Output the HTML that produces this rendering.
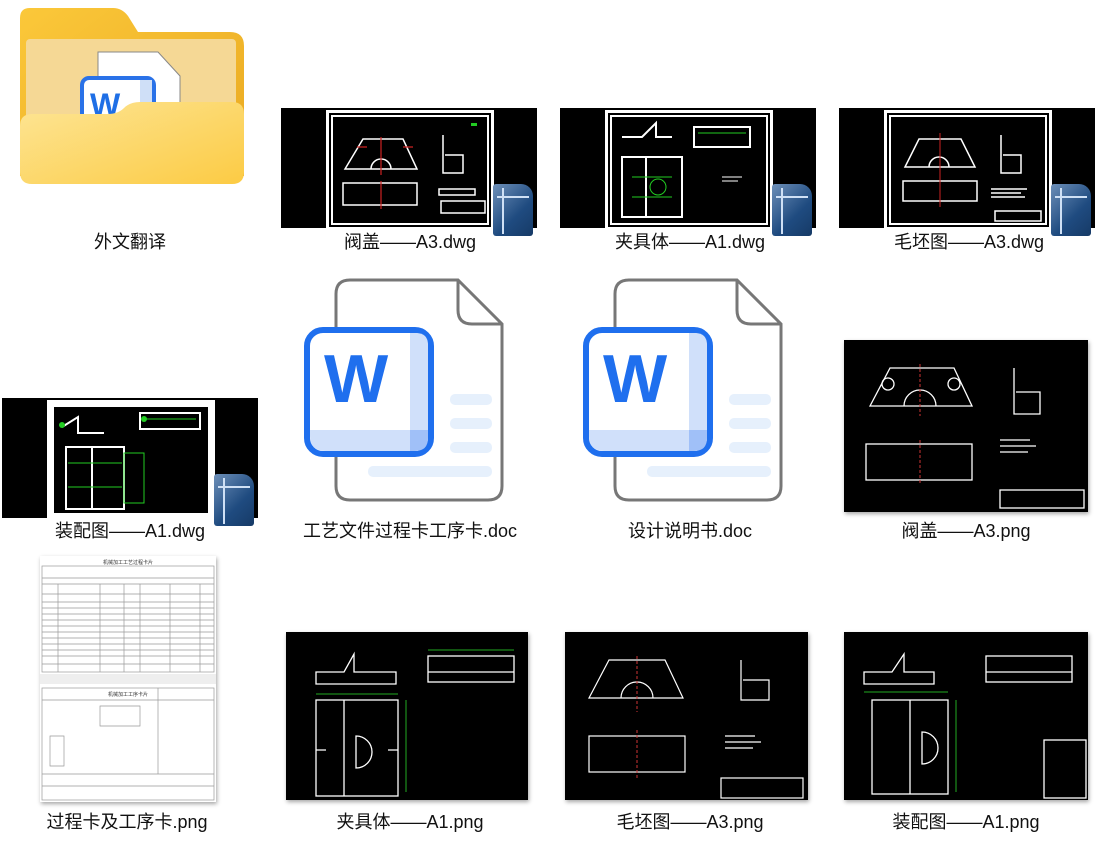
<!DOCTYPE html>
<html><head><meta charset="utf-8"><style>
body{margin:0;width:1101px;height:846px;background:#fff;position:relative;overflow:hidden;font-family:"Liberation Sans","Noto Sans CJK SC",sans-serif}
.a{position:absolute}
.lbl{position:absolute;width:280px;text-align:center;font-size:18px;color:#111;line-height:20px}
.dwg{position:absolute;width:256px;height:120px;background:#000}
.dwg .fr{position:absolute;left:45px;top:2px;width:162px;height:114px;border:3px solid #fff;background:#000}
.dwg .fr:after{content:"";position:absolute;left:2px;top:2px;right:2px;bottom:2px;border:2px solid #fff}
.cad{position:absolute;left:212px;top:76px;width:40px;height:52px;border-radius:3px 12px 3px 3px;background:linear-gradient(135deg,#6d8fb8,#1f4b80 60%,#163a66)}
.cad:before{content:"";position:absolute;left:9px;top:4px;width:2px;height:46px;background:#cfe0f5}
.cad:after{content:"";position:absolute;left:4px;top:12px;width:32px;height:2px;background:#cfe0f5}
.png{position:absolute;background:#000;box-shadow:1px 2px 4px rgba(0,0,0,.35)}
</style></head><body>

<svg class="a" style="left:18px;top:6px" width="228" height="180" viewBox="0 0 228 180">
<defs><linearGradient id="fb" x1="0" y1="0" x2="1" y2="1"><stop offset="0" stop-color="#fbc83a"/><stop offset="1" stop-color="#e9a820"/></linearGradient>
<linearGradient id="ff" x1="0" y1="0" x2="1" y2="1"><stop offset="0" stop-color="#fde595"/><stop offset="1" stop-color="#fccb44"/></linearGradient></defs>
<path d="M12 2 H95 Q104 2 110 10 L120 26 H212 Q226 26 226 40 V170 H2 V12 Q2 2 12 2Z" fill="url(#fb)"/>
<rect x="8" y="33" width="210" height="110" rx="4" fill="#f5d895"/>
<path d="M80 46 H140 L162 70 V110 H80Z" fill="#fff" stroke="#888" stroke-width="1"/>
<rect x="64" y="72" width="72" height="54" rx="7" fill="#fff" stroke="#2a72e8" stroke-width="4"/>
<rect x="122" y="74" width="12" height="50" fill="#cfdff7"/>
<text x="72" y="110" font-family="Liberation Sans" font-weight="bold" font-size="32" fill="#1f6fe6">W</text>
<path d="M14 108 H90 Q100 108 106 102 Q112 96 122 96 H214 Q226 96 226 108 V166 Q226 178 214 178 H14 Q2 178 2 166 V120 Q2 108 14 108Z" fill="url(#ff)"/>
</svg>
<div class="lbl" style="left:-10px;top:232px">外文翻译</div>

<div class="dwg" style="left:281px;top:108px"><div class="fr"><svg width="154" height="106" style="position:absolute;left:4px;top:4px"><g stroke="#fff" fill="none" stroke-width="1.5"><path d="M12 52 L30 22 H70 L84 52Z"/><path d="M38 52 A10 10 0 0 1 58 52"/><rect x="10" y="66" width="74" height="22"/><path d="M110 18 V56 H130 V38 H112"/><rect x="106" y="72" width="36" height="6"/><rect x="108" y="84" width="44" height="12"/></g><g stroke="#c22" stroke-width="1.2"><path d="M48 20 V58 M24 30 h10 M70 30 h10 M48 64 V92"/></g><rect x="138" y="6" width="6" height="3" fill="#2c2"/></svg></div><div class="cad"></div></div>
<div class="lbl" style="left:270px;top:232px">阀盖——A3.dwg</div>

<div class="dwg" style="left:560px;top:108px"><div class="fr"><svg width="154" height="106" style="position:absolute;left:4px;top:4px"><g stroke="#fff" fill="none" stroke-width="2"><path d="M10 20 H30 L44 6 V20 H60"/><rect x="10" y="40" width="60" height="60"/><path d="M34 40 V100"/><rect x="82" y="10" width="56" height="20"/></g><g stroke="#2c2" fill="none"><path d="M20 60 h40 M20 80 h40 M86 16 h48"/><circle cx="46" cy="70" r="8"/></g><path d="M110 60 h20 M110 64 h16" stroke="#fff"/></svg></div><div class="cad"></div></div>
<div class="lbl" style="left:550px;top:232px">夹具体——A1.dwg</div>

<div class="dwg" style="left:839px;top:108px"><div class="fr"><svg width="154" height="106" style="position:absolute;left:4px;top:4px"><g stroke="#fff" fill="none" stroke-width="1.5"><path d="M14 50 L28 22 H70 L84 50Z"/><path d="M38 50 A10 10 0 0 1 58 50"/><rect x="12" y="64" width="74" height="20"/><path d="M110 18 V56 H130 V38 H112"/><path d="M100 72 h36 M100 76 h30 M100 80 h34"/><rect x="104" y="94" width="46" height="10"/></g><path d="M49 16 V90" stroke="#c22"/></svg></div><div class="cad"></div></div>
<div class="lbl" style="left:829px;top:232px">毛坯图——A3.dwg</div>

<div class="dwg" style="left:2px;top:398px"><div class="fr" style="background:#fff"><svg width="154" height="106" style="position:absolute;left:4px;top:4px"><rect width="154" height="106" fill="#000"/><g stroke="#fff" fill="none" stroke-width="2"><path d="M8 20 L24 10 V26 H50"/><rect x="12" y="40" width="58" height="62"/><path d="M38 40 V102"/><rect x="86" y="6" width="60" height="16"/></g><g stroke="#2c2" fill="none"><path d="M14 56 h54 M14 80 h54 M90 12 h52"/><rect x="70" y="46" width="20" height="50"/></g><circle cx="90" cy="12" r="3" fill="#2c2"/><circle cx="8" cy="18" r="3" fill="#2c2"/></svg></div><div class="cad"></div></div>
<div class="lbl" style="left:-10px;top:521px">装配图——A1.dwg</div>

<svg class="a" style="left:300px;top:276px" width="210" height="230" viewBox="0 0 210 230">
<path d="M50 4 H158 L202 48 V210 Q202 224 188 224 H50 Q36 224 36 210 V18 Q36 4 50 4Z" fill="#fff" stroke="#777" stroke-width="3"/>
<path d="M158 4 V34 Q158 48 172 48 H202" fill="none" stroke="#777" stroke-width="3"/>
<g fill="#e6f0fc"><rect x="150" y="118" width="42" height="11" rx="5"/><rect x="150" y="142" width="42" height="11" rx="5"/><rect x="150" y="166" width="42" height="11" rx="5"/><rect x="68" y="190" width="124" height="11" rx="5"/></g>
<rect x="7" y="54" width="124" height="124" rx="16" fill="#fff" stroke="#1f6fee" stroke-width="6"/>
<path d="M110 57 H116 Q128 57 128 69 V160 Q128 175 113 175 H110Z" fill="#d0e0fa"/>
<path d="M10 154 H110 V175 H26 Q10 175 10 160Z" fill="#d0e0fa"/>
<path d="M110 154 H128 V162 Q128 175 115 175 H110Z" fill="#a0c0f8"/>
<text x="24" y="126" font-family="Liberation Sans" font-weight="bold" font-size="68" fill="#1f6fee">W</text>
</svg>
<div class="lbl" style="left:270px;top:521px">工艺文件过程卡工序卡.doc</div>
<svg class="a" style="left:579px;top:276px" width="210" height="230" viewBox="0 0 210 230">
<path d="M50 4 H158 L202 48 V210 Q202 224 188 224 H50 Q36 224 36 210 V18 Q36 4 50 4Z" fill="#fff" stroke="#777" stroke-width="3"/>
<path d="M158 4 V34 Q158 48 172 48 H202" fill="none" stroke="#777" stroke-width="3"/>
<g fill="#e6f0fc"><rect x="150" y="118" width="42" height="11" rx="5"/><rect x="150" y="142" width="42" height="11" rx="5"/><rect x="150" y="166" width="42" height="11" rx="5"/><rect x="68" y="190" width="124" height="11" rx="5"/></g>
<rect x="7" y="54" width="124" height="124" rx="16" fill="#fff" stroke="#1f6fee" stroke-width="6"/>
<path d="M110 57 H116 Q128 57 128 69 V160 Q128 175 113 175 H110Z" fill="#d0e0fa"/>
<path d="M10 154 H110 V175 H26 Q10 175 10 160Z" fill="#d0e0fa"/>
<path d="M110 154 H128 V162 Q128 175 115 175 H110Z" fill="#a0c0f8"/>
<text x="24" y="126" font-family="Liberation Sans" font-weight="bold" font-size="68" fill="#1f6fee">W</text>
</svg>
<div class="lbl" style="left:550px;top:521px">设计说明书.doc</div>

<div class="png" style="left:844px;top:340px;width:244px;height:172px"><svg width="244" height="172"><g stroke="#fff" fill="none" stroke-width="1.3"><path d="M26 66 L46 28 H110 L128 66Z"/><path d="M60 66 A16 16 0 0 1 92 66"/><circle cx="44" cy="44" r="6"/><circle cx="110" cy="44" r="6"/><rect x="22" y="104" width="106" height="36"/><path d="M170 28 V74 H196 V52 H172"/><rect x="156" y="150" width="84" height="18"/><path d="M156 100 h30 M156 106 h36 M156 112 h28"/></g><path d="M76 24 V76 M76 100 V144" stroke="#c33" stroke-dasharray="3 2"/></svg></div>
<div class="lbl" style="left:826px;top:521px">阀盖——A3.png</div>

<div class="png" style="left:40px;top:556px;width:176px;height:246px;background:#fff"><svg width="176" height="246"><g stroke="#999" fill="none" stroke-width=".7"><rect x="2" y="10" width="172" height="106"/><path d="M2 22 h172 M2 28 h172 M2 38 h172 M2 46h172 M2 52h172 M2 58h172 M2 64h172 M2 70h172 M2 76h172 M2 82h172 M2 88h172 M2 94h172 M2 100h172 M2 108h172 M18 28 V116 M60 28 V116 M84 28V116 M100 28V116 M130 28V116 M160 28V116"/><rect x="2" y="132" width="172" height="112"/><path d="M2 144h172 M2 218h172 M2 230h172 M118 132V218"/><path d="M10 180 h14 v30 h-14z M60 150 h40 v20 h-40z"/></g><rect x="0" y="118" width="176" height="10" fill="#eee"/><text x="88" y="8" font-size="5" text-anchor="middle" fill="#333">机械加工工艺过程卡片</text><text x="88" y="140" font-size="5" text-anchor="middle" fill="#333">机械加工工序卡片</text></svg></div>
<div class="lbl" style="left:-13px;top:812px">过程卡及工序卡.png</div>

<div class="png" style="left:286px;top:632px;width:242px;height:168px"><svg width="242" height="168"><g stroke="#fff" fill="none" stroke-width="1.3"><path d="M30 40 H58 L68 22 V40 H110 V52 H30Z"/><rect x="142" y="24" width="86" height="26"/><path d="M142 40 h86"/><rect x="30" y="68" width="82" height="96"/><path d="M58 68 V164"/><path d="M70 104 A16 16 0 0 1 70 136Z"/><path d="M30 118 h10 M102 118 h10"/></g><g stroke="#2a2" fill="none"><path d="M30 62 h82 M120 68 V160 M142 18 h86"/></g></svg></div>
<div class="lbl" style="left:270px;top:812px">夹具体——A1.png</div>

<div class="png" style="left:565px;top:632px;width:243px;height:168px"><svg width="243" height="168"><g stroke="#fff" fill="none" stroke-width="1.2"><path d="M24 66 L44 28 H100 L118 66Z"/><path d="M56 66 A16 16 0 0 1 88 66"/><rect x="24" y="104" width="96" height="36"/><path d="M176 28 V68 H204 V48 H178"/><rect x="156" y="146" width="82" height="20"/><path d="M160 104 h30 M160 110 h36 M160 116 h28"/></g><path d="M72 24 V80 M72 98 V146" stroke="#c33" stroke-dasharray="3 2"/></svg></div>
<div class="lbl" style="left:550px;top:812px">毛坯图——A3.png</div>

<div class="png" style="left:844px;top:632px;width:244px;height:168px"><svg width="244" height="168"><g stroke="#fff" fill="none" stroke-width="1.3"><path d="M20 40 H48 L60 22 V40 H90 V52 H20Z"/><rect x="142" y="24" width="86" height="26"/><path d="M142 40 h86"/><rect x="28" y="68" width="76" height="94"/><path d="M66 68 V162"/><path d="M78 100 A16 16 0 0 1 78 132Z"/><rect x="200" y="108" width="42" height="58"/></g><g stroke="#2a2" fill="none"><path d="M20 60 h84 M112 68 V160"/></g></svg></div>
<div class="lbl" style="left:826px;top:812px">装配图——A1.png</div>

</body></html>
